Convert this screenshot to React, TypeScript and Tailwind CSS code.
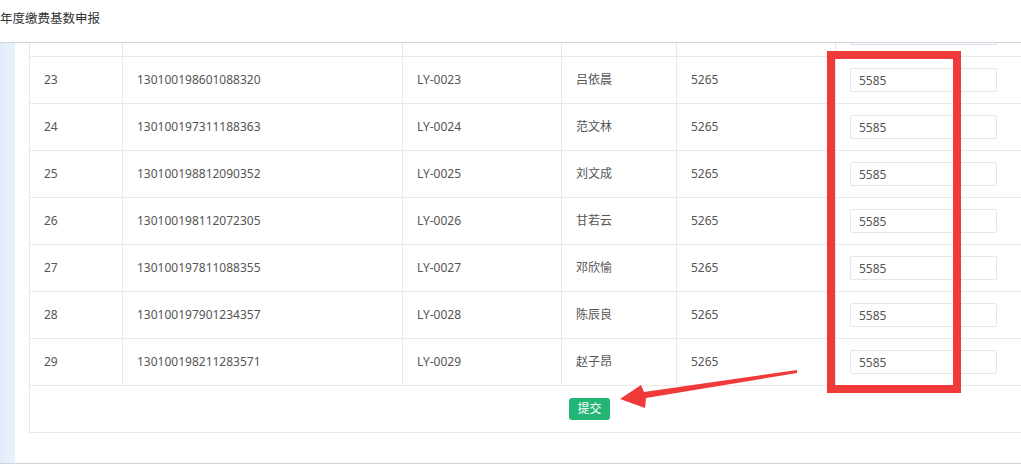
import React from 'react';

const rows = [
  { no: 23, id: '130100198601088320', code: 'LY-0023', name: '吕依晨' },
  { no: 24, id: '130100197311188363', code: 'LY-0024', name: '范文林' },
  { no: 25, id: '130100198812090352', code: 'LY-0025', name: '刘文成' },
  { no: 26, id: '130100198112072305', code: 'LY-0026', name: '甘若云' },
  { no: 27, id: '130100197811088355', code: 'LY-0027', name: '邓欣愉' },
  { no: 28, id: '130100197901234357', code: 'LY-0028', name: '陈辰良' },
  { no: 29, id: '130100198211283571', code: 'LY-0029', name: '赵子昂' },
];

const font = { fontFamily: '"Noto Sans", "Noto Sans CJK SC", sans-serif' };

function Cell({ w, children, last }: { w: string; children?: React.ReactNode; last?: boolean }) {
  return (
    <div className={`${w} shrink-0 flex items-center px-[14px] ${last ? '' : 'border-r border-[#e7eaec]'}`}>
      {children}
    </div>
  );
}

export default function App() {
  return (
    <div className="w-[1021px] h-[474px] overflow-hidden bg-white text-[#555]" style={font}>
      {/* page title */}
      <div className="h-[42px] pt-[10px] text-[12.5px] leading-[18px] text-[#333]">年度缴费基数申报</div>

      <div className="relative flex h-[422px] border-y border-[#ccd6de]">
        {/* left nav strip */}
        <div className="w-[15px] shrink-0 bg-gradient-to-r from-[#e1ebf8] to-[#ecf2fb]" />
        <div className="w-[14px] shrink-0" />

        <div className="w-[1120px] shrink-0">
          <div className="border-l border-b border-[#e7eaec] text-[12px]">
            {/* partially scrolled-off row */}
            <div className="flex h-[14px] border-b border-[#e7eaec]">
              <Cell w="w-[93px]" />
              <Cell w="w-[280px]" />
              <Cell w="w-[159px]" />
              <Cell w="w-[115px]" />
              <Cell w="w-[159px]" />
              <div className="flex-1 pl-[14px]">
                <div className="w-[147px] h-[2px] border-b border-x border-[#d9dde6] rounded-b-sm" />
              </div>
            </div>

            {rows.map((r) => (
              <div key={r.no} className="flex h-[47px] border-b border-[#e7eaec]">
                <Cell w="w-[93px]">{r.no}</Cell>
                <Cell w="w-[280px]">{r.id}</Cell>
                <Cell w="w-[159px]">{r.code}</Cell>
                <Cell w="w-[115px]">{r.name}</Cell>
                <Cell w="w-[159px]">5265</Cell>
                <div className="flex-1 flex items-center pl-[14px]">
                  <input
                    defaultValue="5585"
                    className="w-[147px] h-[24px] px-[8px] border border-[#e5e6e7] rounded-[2px] text-[12px] text-[#555] outline-none"
                    style={font}
                  />
                </div>
              </div>
            ))}

            <div className="h-[46px] flex items-center justify-center">
              <button className="h-[22px] px-[8px] rounded-[3px] bg-[#22b573] text-white text-[12px] leading-none">
                提交
              </button>
            </div>
          </div>
        </div>

        {/* annotation: red box */}
        <div className="absolute left-[827px] top-[8px] w-[134px] h-[342px] border-[8px] border-[#f03a3a]" />

        {/* annotation: arrow */}
        <svg className="absolute left-0 top-0" width="1021" height="422" viewBox="0 42 1021 422">
          <polygon
            points="620,398 641,384 644,391 797,369 797,372 646,397 645,407"
            fill="#f03a3a"
          />
        </svg>
      </div>
    </div>
  );
}
